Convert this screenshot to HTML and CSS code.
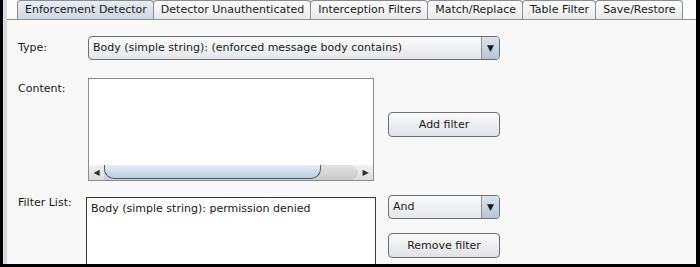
FILE: index.html
```html
<!DOCTYPE html>
<html lang="en">
<head>
    <meta charset="UTF-8">
    <title>Enforcement Detector</title>
    <link rel="stylesheet" href="styles.css">
</head>
<body>

    <div id="frame">
        <div id="side-strip"></div>
        <div id="panel">
            <div id="tabs">
                <div class="tab selected">Enforcement Detector</div>
                <div class="tab">Detector Unauthenticated</div>
                <div class="tab">Interception Filters</div>
                <div class="tab">Match/Replace</div>
                <div class="tab">Table Filter</div>
                <div class="tab">Save/Restore</div>
            </div>

            <div id="content">
                <div class="row row-type">
                    <div class="label">Type:</div>
                    <div class="combo combo-wide">
                        <span class="combo-text">Body (simple string): (enforced message body contains)</span>
                        <span class="combo-arrow">&#9660;</span>
                    </div>
                </div>

                <div class="row row-content">
                    <div class="label">Content:</div>
                    <div class="textarea">
                        <div class="text-space"></div>
                        <div class="hscroll">
                            <span class="scroll-btn">&#9664;</span>
                            <div class="track">
                                <div class="thumb"></div>
                            </div>
                            <span class="scroll-btn">&#9654;</span>
                        </div>
                    </div>
                    <div class="side-col">
                        <button class="btn">Add filter</button>
                    </div>
                </div>

                <div class="row row-list">
                    <div class="label">Filter List:</div>
                    <div class="list">
                        <div class="list-item">Body (simple string): permission denied</div>
                    </div>
                    <div class="side-col side-list">
                        <div class="combo combo-small">
                            <span class="combo-text">And</span>
                            <span class="combo-arrow">&#9660;</span>
                        </div>
                        <button class="btn">Remove filter</button>
                    </div>
                </div>
            </div>
        </div>
    </div>

</body>
</html>
```

FILE: styles.css
```css
body {
    margin: 0;
    padding: 0;
    background-color: #000;
    font-family: 'DejaVu Sans', sans-serif;
    font-size: 11px;
    color: #1a1a1a;
}

#frame {
    display: flex;
    width: 693px;
    height: 264px;
    border-left: 3px solid #000;
    overflow: hidden;
}

#side-strip {
    width: 4px;
    background-color: #d6d9df;
    flex-shrink: 0;
}

#panel {
    flex: 1;
    background-color: #f8f8f8;
    display: flex;
    flex-direction: column;
}

#tabs {
    display: flex;
    height: 23px;
    padding-left: 10px;
    align-items: flex-end;
    border-bottom: 1px solid #8e8f91;
    background-color: #fbfbfb;
}

.tab {
    height: 18px;
    line-height: 18px;
    padding: 0 6px 0 7px;
    border: 1px solid #8a8d92;
    border-bottom: none;
    border-radius: 4px 4px 0 0;
    background: linear-gradient(#fdfdfd, #e9e9ea);
    margin-right: -1px;
    white-space: nowrap;
}

.tab.selected {
    background: linear-gradient(#e8edf3, #cdd6e0);
}

#content {
    padding: 16px 0 0 11px;
}

.row {
    display: flex;
}

.label {
    width: 70px;
}

.row-type {
    height: 24px;
    margin-bottom: 18px;
}

.row-type .label {
    padding-top: 5px;
}

.combo {
    display: flex;
    border: 1px solid #6b6f75;
    border-radius: 4px;
    background: linear-gradient(#fafafa, #e4e6e9);
    box-sizing: border-box;
    overflow: hidden;
}

.combo-wide {
    width: 412px;
    height: 24px;
}

.combo-text {
    flex: 1;
    line-height: 22px;
    padding-left: 4px;
}

.combo-arrow {
    width: 17px;
    border-left: 1px solid #8b9098;
    background: linear-gradient(#dbe4ee, #b6c5d6);
    text-align: center;
    line-height: 22px;
    font-size: 9px;
}

.row-content {
    height: 103px;
    margin-bottom: 14px;
}

.row-content .label {
    padding-top: 4px;
}

.textarea {
    width: 286px;
    border: 1px solid #8c8d90;
    background-color: #fff;
    display: flex;
    flex-direction: column;
    box-sizing: border-box;
}

.text-space {
    flex: 1;
}

.hscroll {
    height: 15px;
    display: flex;
    align-items: center;
    background: linear-gradient(#f2f2f2, #dcdcdc);
}

.scroll-btn {
    width: 15px;
    text-align: center;
    font-size: 8px;
    color: #333;
}

.track {
    flex: 1;
    height: 15px;
    display: flex;
    background: linear-gradient(#e2e2e2, #cacaca);
    border-radius: 0 8px 8px 0;
}

.thumb {
    width: 215px;
    height: 13px;
    border: 1px solid #4e5f74;
    border-top: none;
    border-radius: 0 0 10px 10px;
    background: linear-gradient(#e6eef6, #b9cde0);
}

.side-col {
    margin-left: 14px;
    display: flex;
    flex-direction: column;
    padding-top: 34px;
}

.btn {
    width: 112px;
    height: 25px;
    border: 1px solid #6b6f75;
    border-radius: 4px;
    background: linear-gradient(#fafafa, #e0e2e6);
    font-family: 'DejaVu Sans', sans-serif;
    font-size: 11px;
    color: #1a1a1a;
    padding: 0;
}

.row-list {
    flex: 1;
}

.row-list .label {
    padding-top: 1px;
    width: 68px;
}

.list {
    width: 290px;
    height: 80px;
    margin-top: 2px;
    border: 1px solid #3a3a3a;
    background-color: #fff;
    box-sizing: border-box;
    padding: 4px 4px;
}

.side-list {
    padding-top: 0;
    margin-left: 12px;
    gap: 14px;
}

.combo-small {
    width: 112px;
    height: 24px;
}
```
